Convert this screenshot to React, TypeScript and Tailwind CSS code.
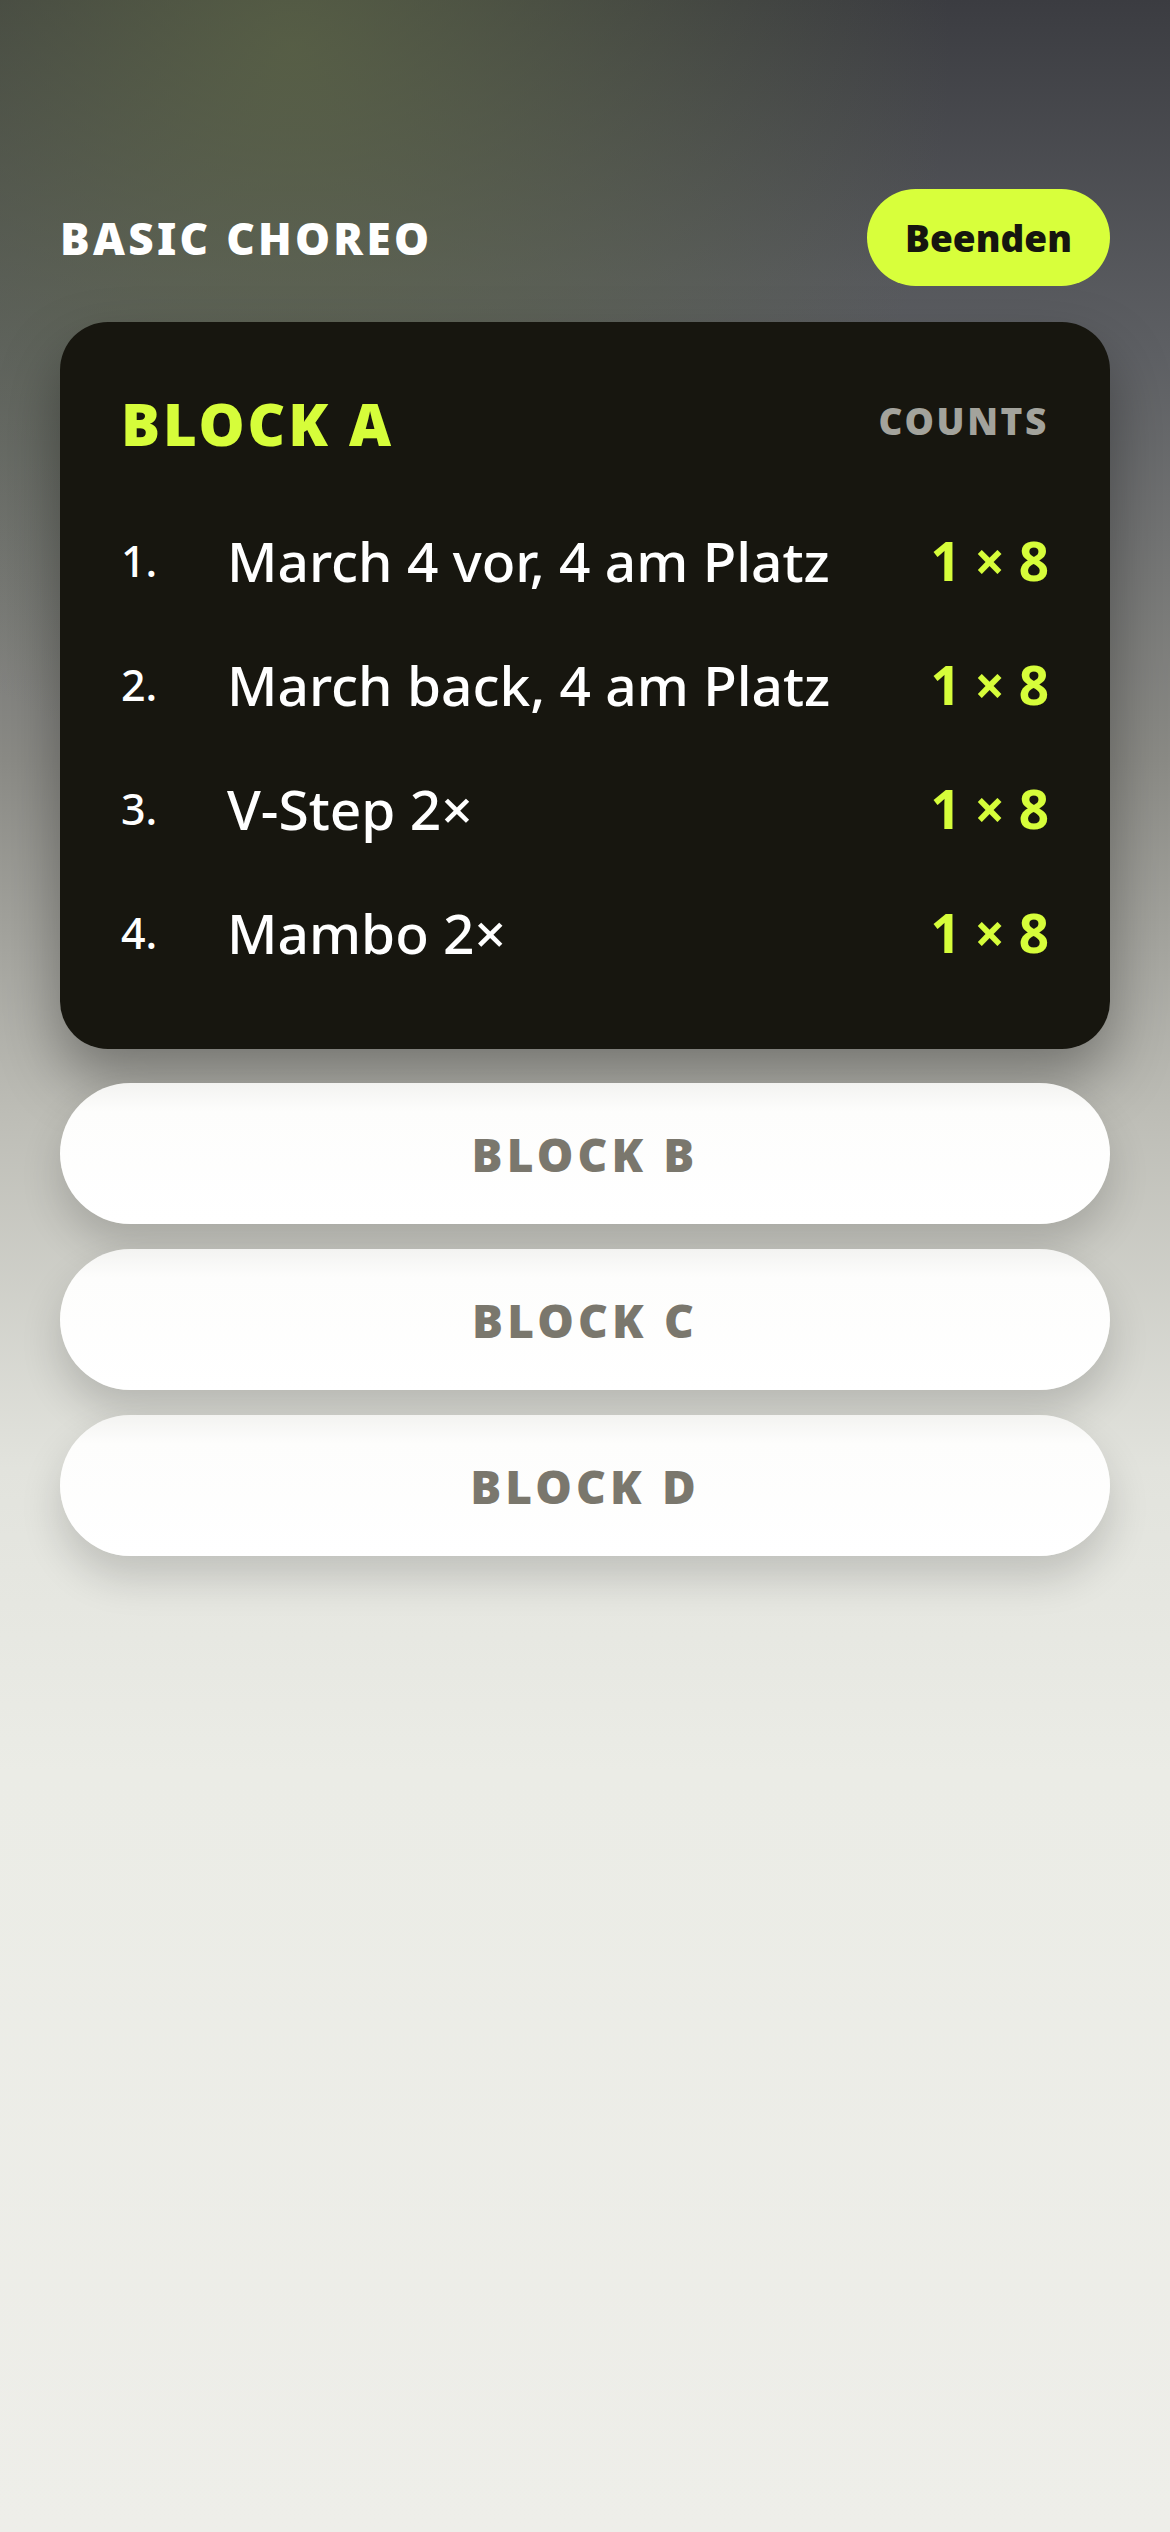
const steps = [
  { n: "1.", text: "March 4 vor, 4 am Platz", count: "1 × 8" },
  { n: "2.", text: "March back, 4 am Platz", count: "1 × 8" },
  { n: "3.", text: "V-Step 2×", count: "1 × 8" },
  { n: "4.", text: "Mambo 2×", count: "1 × 8" },
];

const otherBlocks = ["BLOCK B", "BLOCK C", "BLOCK D"];

export default function App() {
  return (
    <div
      className="min-h-[2532px] w-full bg-[radial-gradient(ellipse_75%_38%_at_25%_2%,rgba(96,106,70,0.7),rgba(96,106,70,0)_75%),linear-gradient(180deg,#3b3c41_0%,#5e6064_14%,#8b8b86_30%,#bdbdb6_44%,#e2e3dd_58%,#ebece6_70%,#eeeee9_100%)] font-['Noto_Sans',sans-serif]"
    >
      <div className="px-[60px] pt-[189px]">
        {/* Header */}
        <div className="flex items-center justify-between h-[97px]">
          <h1 className="text-[44px] font-black tracking-[0.075em] text-white leading-none">
            BASIC CHOREO
          </h1>
          <button className="h-[97px] w-[243px] rounded-full bg-[#d8ff3b] text-[37px] font-black text-[#16160f] leading-none">
            Beenden
          </button>
        </div>

        {/* Active block */}
        <div className="mt-[36px] rounded-[48px] bg-[#17160f] px-[61px] pt-[62px] pb-[55px] shadow-[0_30px_60px_rgba(0,0,0,0.35)]">
          <div className="flex items-center justify-between h-[80px]">
            <h2 className="text-[58px] font-black tracking-[0.05em] text-[#d6fd3a] leading-none">
              BLOCK A
            </h2>
            <span className="text-[37px] font-black tracking-[0.07em] text-[#a3a39c] leading-none -mt-[8px]">
              COUNTS
            </span>
          </div>
          <ul className="mt-[34px]">
            {steps.map((s) => (
              <li key={s.n} className="flex items-center h-[124px]">
                <span className="w-[106px] text-[43px] font-medium text-white leading-none">{s.n}</span>
                <span className="flex-1 text-[55px] font-medium text-white leading-none">{s.text}</span>
                <span className="text-[53px] font-bold text-[#d6fd3a] leading-none">{s.count}</span>
              </li>
            ))}
          </ul>
        </div>

        {/* Collapsed blocks */}
        <div className="mt-[34px] flex flex-col gap-[25px]">
          {otherBlocks.map((b) => (
            <button
              key={b}
              className="h-[141px] w-full rounded-full bg-[linear-gradient(180deg,#f3f3f1_0%,#fdfdfc_20%,#ffffff_100%)] shadow-[0_22px_40px_rgba(0,0,0,0.16)] text-[46px] font-black tracking-[0.09em] text-[#7a776d] leading-none"
            >
              {b}
            </button>
          ))}
        </div>
      </div>
    </div>
  );
}
